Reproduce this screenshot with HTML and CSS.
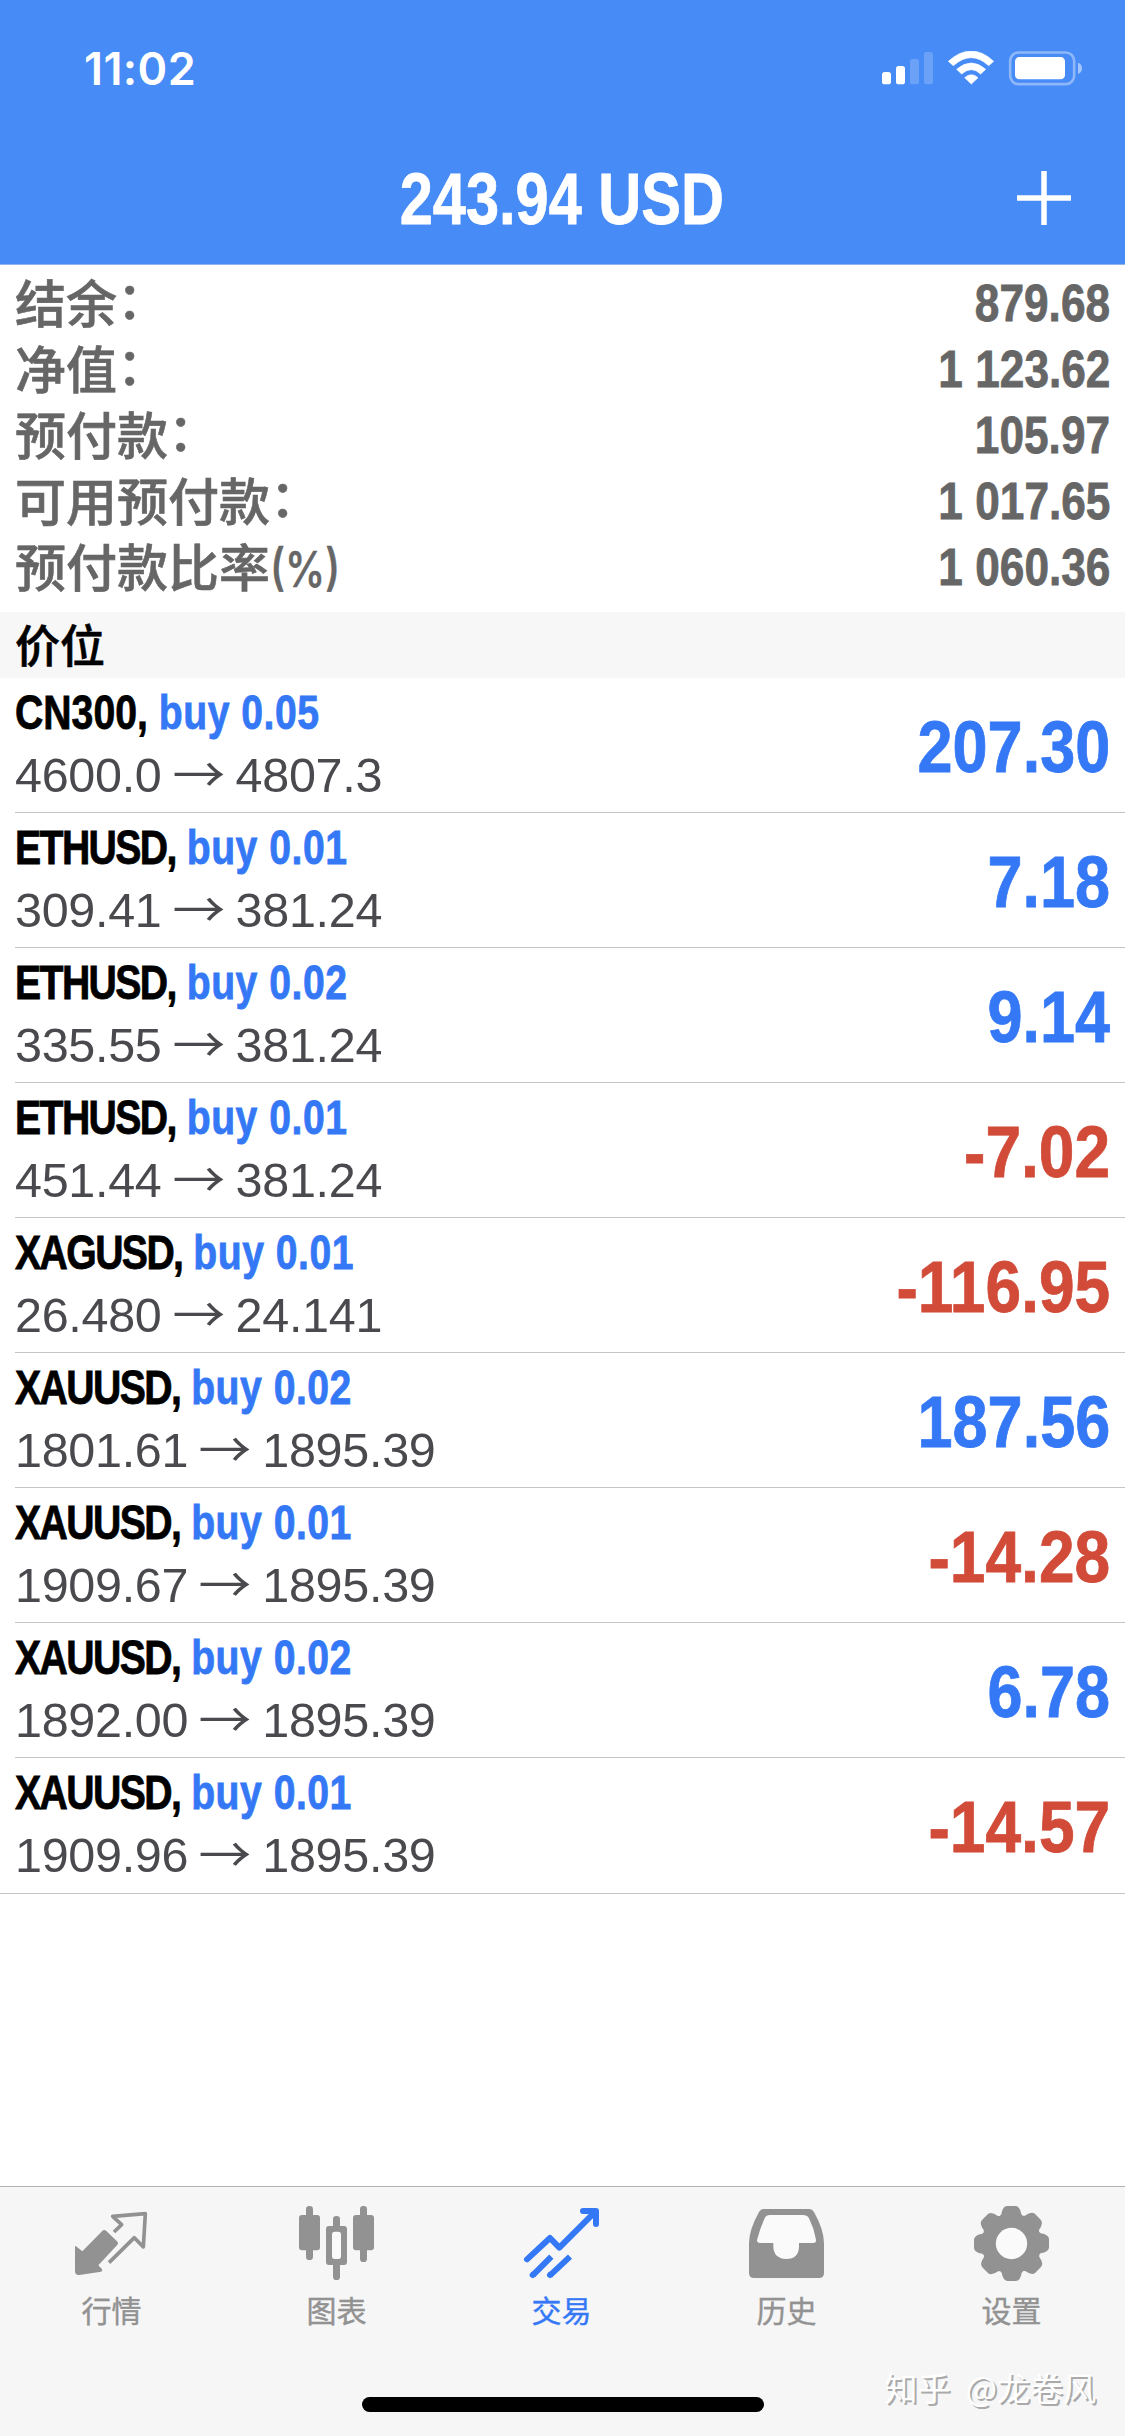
FILE: index.html
```html
<!DOCTYPE html>
<html lang="zh-CN">
<head>
<meta charset="utf-8">
<title>交易</title>
<link rel="stylesheet" href="styles.css">
</head>
<body>
<div class="app">
  <header class="header">
    <div class="status">
      <span class="time">11:02</span>
      <svg class="status-icons" viewBox="0 0 612 105" fill="#fff">
        <rect x="0" y="63" width="27" height="37" rx="8"/>
        <rect x="42" y="45" width="27" height="55" rx="8"/>
        <rect x="84" y="24" width="27" height="76" rx="8" opacity=".2"/>
        <rect x="126" y="3" width="27" height="97" rx="8" opacity=".2"/>
        <path d="M199 31Q268-31 335 31L320 44Q268-4 214 44Z" stroke="#fff" stroke-width="2" stroke-linejoin="round"/>
        <path d="M224 55Q268 17 311 55L296 69Q268 43 239 69Z" stroke="#fff" stroke-width="2" stroke-linejoin="round"/>
        <path d="M248 80Q268 62 288 80L268 99Z" stroke="#fff" stroke-width="2" stroke-linejoin="round"/>
        <rect x="384.500" y="4.500" width="192" height="95" rx="25" fill="none" stroke="#fff" stroke-width="8" opacity=".38"/>
        <rect x="399" y="18" width="150" height="67" rx="13"/>
        <path d="M588 35Q600 39 600 52T588 69Z" opacity=".5"/>
      </svg>
    </div>
    <div class="navbar">
      <h1 class="title"><span class="cond">243.94 USD</span></h1>
      <svg class="plus" viewBox="0 0 56 56" stroke="#fff" stroke-width="5.500"><path d="M28 1V55M1 28H55"/></svg>
    </div>
  </header>

  <section class="summary">
    <div class="sum-row"><span>结余<span class="colon">：</span></span><b class="cond">879.68</b></div>
    <div class="sum-row"><span>净值<span class="colon">：</span></span><b class="cond">1 123.62</b></div>
    <div class="sum-row"><span>预付款<span class="colon">：</span></span><b class="cond">105.97</b></div>
    <div class="sum-row"><span>可用预付款<span class="colon">：</span></span><b class="cond">1 017.65</b></div>
    <div class="sum-row"><span>预付款比率<span class="unit">(%)</span></span><b class="cond">1 060.36</b></div>
  </section>

  <h2 class="section-title">价位</h2>

  <ul class="positions">
    <li class="position"><div><div class="deal cond"><span>CN300,</span> <em>buy 0.05</em></div><div class="prices">4600.0 <i>→</i> 4807.3</div></div><b class="profit cond">207.30</b></li>
    <li class="position"><div><div class="deal cond"><span class="wide">ETHUSD,</span> <em>buy 0.01</em></div><div class="prices">309.41 <i>→</i> 381.24</div></div><b class="profit cond">7.18</b></li>
    <li class="position"><div><div class="deal cond"><span class="wide">ETHUSD,</span> <em>buy 0.02</em></div><div class="prices">335.55 <i>→</i> 381.24</div></div><b class="profit cond">9.14</b></li>
    <li class="position"><div><div class="deal cond"><span class="wide">ETHUSD,</span> <em>buy 0.01</em></div><div class="prices">451.44 <i>→</i> 381.24</div></div><b class="profit cond loss">-7.02</b></li>
    <li class="position"><div><div class="deal cond"><span class="wide">XAGUSD,</span> <em>buy 0.01</em></div><div class="prices">26.480 <i>→</i> 24.141</div></div><b class="profit cond loss">-116.95</b></li>
    <li class="position"><div><div class="deal cond"><span class="wide">XAUUSD,</span> <em>buy 0.02</em></div><div class="prices">1801.61 <i>→</i> 1895.39</div></div><b class="profit cond">187.56</b></li>
    <li class="position"><div><div class="deal cond"><span class="wide">XAUUSD,</span> <em>buy 0.01</em></div><div class="prices">1909.67 <i>→</i> 1895.39</div></div><b class="profit cond loss">-14.28</b></li>
    <li class="position"><div><div class="deal cond"><span class="wide">XAUUSD,</span> <em>buy 0.02</em></div><div class="prices">1892.00 <i>→</i> 1895.39</div></div><b class="profit cond">6.78</b></li>
    <li class="position"><div><div class="deal cond"><span class="wide">XAUUSD,</span> <em>buy 0.01</em></div><div class="prices">1909.96 <i>→</i> 1895.39</div></div><b class="profit cond loss">-14.57</b></li>
  </ul>

  <nav class="tabbar">
    <a class="tab">
      <svg viewBox="225 108 225 225" fill="currentColor">
        <path d="M225 230Q226 226 230 230L247 244L306 184Q312 177 319 183L351 214Q357 220 351 226L295 286L305 296Q309 302 303 305L238 315Q225 316 225 304Z"/>
        <path d="M342 186L365 164L338 139L436 131L430 231L403 203L327 278" fill="none" stroke="currentColor" stroke-width="11" stroke-linejoin="round"/>
      </svg>
      <span>行情</span>
    </a>
    <a class="tab">
      <svg viewBox="900 108 225 225" fill="currentColor">
        <rect x="918" y="108" width="21" height="162" rx="10"/><rect x="897" y="135" width="63" height="106" rx="9"/>
        <rect x="1080" y="108" width="21" height="168" rx="10"/><rect x="1059" y="135" width="63" height="106" rx="9"/>
        <rect x="999" y="138" width="21" height="192" rx="10"/><rect x="978" y="168" width="63" height="117" rx="9"/>
        <rect x="996" y="185" width="27" height="82" rx="8" fill="#fafafa"/>
      </svg>
      <span>图表</span>
    </a>
    <a class="tab active">
      <svg viewBox="375 108 225 225" fill="none" stroke="currentColor" stroke-width="18" stroke-linecap="round" stroke-linejoin="round">
        <path d="M381 268L450 204L478 233L586 125M549 123H588V162"/>
        <path d="M398 316L454 260M450 316L510 260" stroke-linecap="butt"/>
        <path d="M398 315L399 314M450 315L451 314"/>
        <path d="M566 128L584 146V128Z" fill="currentColor" stroke-width="4"/>
      </svg>
      <span>交易</span>
    </a>
    <a class="tab">
      <svg viewBox="90 108 225 225" fill="currentColor">
        <path d="M130 117H268Q277 117 282 126Q312 180 312 220V309Q312 324 297 324H102Q87 324 87 309V220Q87 180 117 126Q122 117 130 117Z"/>
        <path d="M150 135H248Q262 135 267 145Q282 175 288 209Q289 219 280 219H237V228Q237 267 198 267Q160 265 160 228V219H119Q110 218 111 210Q120 175 134 145Q138 135 150 135Z" fill="#fafafa"/>
      </svg>
      <span>历史</span>
    </a>
    <a class="tab">
      <svg viewBox="765 108 225 225" fill="currentColor">
        <defs><path id="tooth" d="M826 152L844 133Q848 108 862 108H887Q900 110 904 133L922 152Z"/></defs>
        <circle cx="874.500" cy="220.500" r="88"/>
        <use href="#tooth"/>
        <use href="#tooth" transform="rotate(45 874.500 220.500)"/>
        <use href="#tooth" transform="rotate(90 874.500 220.500)"/>
        <use href="#tooth" transform="rotate(135 874.500 220.500)"/>
        <use href="#tooth" transform="rotate(180 874.500 220.500)"/>
        <use href="#tooth" transform="rotate(225 874.500 220.500)"/>
        <use href="#tooth" transform="rotate(270 874.500 220.500)"/>
        <use href="#tooth" transform="rotate(315 874.500 220.500)"/>
        <circle cx="874.500" cy="220.500" r="47" fill="#fafafa"/>
      </svg>
      <span>设置</span>
    </a>
    <div class="home-indicator"></div>
    <div class="watermark">知乎 @龙卷风</div>
  </nav>
</div>
</body>
</html>
```
FILE: styles.css
```css
* { box-sizing: border-box; margin: 0; padding: 0; }

body {
  width: 1125px;
  background: #fff;
  font-family: "Liberation Sans", "Noto Sans CJK SC", sans-serif;
}

.app {
  display: flex;
  flex-direction: column;
  height: 2436px;
}

/* condensed bold face */
.cond {
  display: inline-block;
  font-family: "Liberation Sans", sans-serif;
  font-weight: 700;
  white-space: nowrap;
  -webkit-text-stroke: 0.8px currentColor;
}

.header {
  height: 265px;
  background: #478bf6;
  border-bottom: 1px solid #8fb4ea;
  color: #fff;
}

.status {
  display: flex;
  justify-content: space-between;
  align-items: flex-start;
  height: 132px;
  padding: 51px 39px 0 84px;
}

.time {
  font: 600 45px/36px Inter, sans-serif;
  letter-spacing: 0.4px;
}

.status-icons { width: 204px; height: 35px; }

.navbar {
  display: grid;
  grid-template-columns: 1fr auto 1fr;
  align-items: center;
  height: 132px;
  padding-right: 53px;
}

.title {
  grid-column: 2;
  font-size: 73px;
  line-height: 80px;
  padding: 2px 0 0 51px;
}

.title .cond { transform: scaleX(.815); }

.plus { width: 56px; height: 56px; justify-self: end; }

.summary {
  height: 347px;
  padding: 4px 15px 0;
  color: #666;
}

.sum-row {
  display: flex;
  justify-content: space-between;
  height: 66px;
  font: 500 51px/64px "Noto Sans CJK SC", sans-serif;
  -webkit-text-stroke: 0.6px currentColor;
}

.sum-row .cond {
  font-size: 52px;
  line-height: 69px;
  transform: scaleX(.85);
  transform-origin: right;
}

.colon {
  display: inline-block;
  transform: translateY(-4px);
}

.unit {
  display: inline-block;
  font-family: Inter, sans-serif;
  font-size: 50px;
  transform: scaleX(.81);
  transform-origin: left;
}

.section-title {
  height: 66px;
  padding-left: 15px;
  background: #f7f7f7;
  font: 500 45px/64px "Noto Sans CJK SC", sans-serif;
  -webkit-text-stroke: 0.6px currentColor;
}

.positions { list-style: none; }

.position {
  display: flex;
  justify-content: space-between;
  align-items: center;
  height: 135px;
  margin-left: 15px;
  padding: 0 15px 2px 0;
  border-bottom: 1px solid #c4c4c7;
}

.position:last-child {
  height: 136px;
  margin-left: 0;
  padding: 0 15px 3px;
}

.deal {
  font-size: 49px;
  line-height: 62px;
  transform: scaleX(.8);
  transform-origin: left;
}

.deal .wide { letter-spacing: -2px; }

.deal em {
  font-style: normal;
  letter-spacing: 0.6px;
  color: #3478f6;
}

.prices {
  font-size: 48.500px;
  line-height: 64px;
  letter-spacing: -0.3px;
  color: #4a4a4e;
  white-space: nowrap;
}

.prices i {
  display: inline-block;
  font: 400 48px/48px "Noto Sans CJK SC", sans-serif;
  transform: scaleX(1.1);
}

.profit {
  padding-top: 5px;
  font-size: 72px;
  line-height: 80px;
  color: #3478f6;
  transform: scaleX(.875);
  transform-origin: right;
}

.profit.loss {
  color: #d14b38;
  transform: scaleX(.89);
}

.tabbar {
  position: relative;
  display: flex;
  height: 250px;
  margin-top: auto;
  border-top: 1px solid #b2b2b2;
  background: #f6f6f6;
}

.tab {
  display: flex;
  flex: 1;
  flex-direction: column;
  align-items: center;
  gap: 7px;
  padding-top: 19px;
  color: #929292;
}

.tab svg { width: 75px; height: 75px; overflow: visible; }

.tab span {
  padding-right: 2px;
  font: 400 30px/42px "Noto Sans CJK SC", sans-serif;
  -webkit-text-stroke: 0.4px currentColor;
}

.tab.active { color: #3478f6; }

.home-indicator {
  position: absolute;
  left: 362px;
  bottom: 24px;
  width: 402px;
  height: 15px;
  border-radius: 8px;
  background: #000;
}

.watermark {
  position: absolute;
  right: 29px;
  bottom: 25px;
  font: 400 33px/48px "Noto Sans CJK SC", sans-serif;
  word-spacing: 8px;
  color: #fff;
  text-shadow: 2px 2px 0 #aaa;
}
```
